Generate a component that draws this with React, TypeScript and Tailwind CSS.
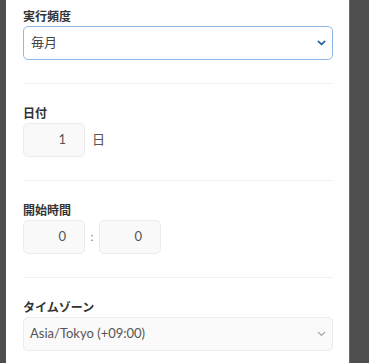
import React from 'react';

const font = { fontFamily: 'Lato, "Noto Sans CJK JP", sans-serif' };

function Chevron({ className, strokeWidth }: { className: string; strokeWidth: number }) {
  return (
    <svg className={className} viewBox="0 0 10 6" fill="none" stroke="currentColor" strokeWidth={strokeWidth} strokeLinecap="round" strokeLinejoin="round">
      <path d="M1.5 1.2 5 4.6 8.5 1.2" />
    </svg>
  );
}

function Label({ children }: { children: React.ReactNode }) {
  return <div className="text-[12px] leading-[18px] font-bold text-[#333]">{children}</div>;
}

function NumBox({ value }: { value: string }) {
  return (
    <div className="w-[62px] h-[34px] rounded-[5px] border border-[#ececec] bg-[#f9f9f9] flex items-center justify-end pr-[18px] text-[13px] text-[#555]">
      {value}
    </div>
  );
}

function Divider() {
  return <div className="h-px bg-[#f1f1f1] mt-[23px] mb-[21px]" />;
}

export default function App() {
  return (
    <div className="w-[369px] h-[363px] bg-[#4e4e4e] overflow-hidden" style={font}>
      <div className="ml-[6px] w-[344px] h-full bg-white border-r border-[#6a6a6a] pl-[17px] pr-[16px] pt-[8px]">
        <Label>実行頻度</Label>
        <div className="h-[34px] rounded-[5px] border border-[#8fb8ea] bg-white flex items-center justify-between pl-[7px] pr-[6px] text-[13px] text-[#444]">
          <span>毎月</span>
          <Chevron className="w-[9px] h-[6px] text-[#2b65a8]" strokeWidth={2} />
        </div>

        <Divider />

        <Label>日付</Label>
        <div className="flex items-center gap-[7px]">
          <NumBox value="1" />
          <span className="text-[13px] text-[#555]">日</span>
        </div>

        <Divider />

        <Label>開始時間</Label>
        <div className="flex items-center">
          <NumBox value="0" />
          <span className="w-[14px] text-center text-[12px] text-[#777]">:</span>
          <NumBox value="0" />
        </div>

        <Divider />

        <Label>タイムゾーン</Label>
        <div className="h-[34px] rounded-[5px] border border-[#ececec] bg-[#fafafa] flex items-center justify-between pl-[6px] pr-[6px] text-[13px] text-[#555]">
          <span>Asia/Tokyo (+09:00)</span>
          <Chevron className="w-[9px] h-[6px] text-[#999]" strokeWidth={1.2} />
        </div>
      </div>
    </div>
  );
}
